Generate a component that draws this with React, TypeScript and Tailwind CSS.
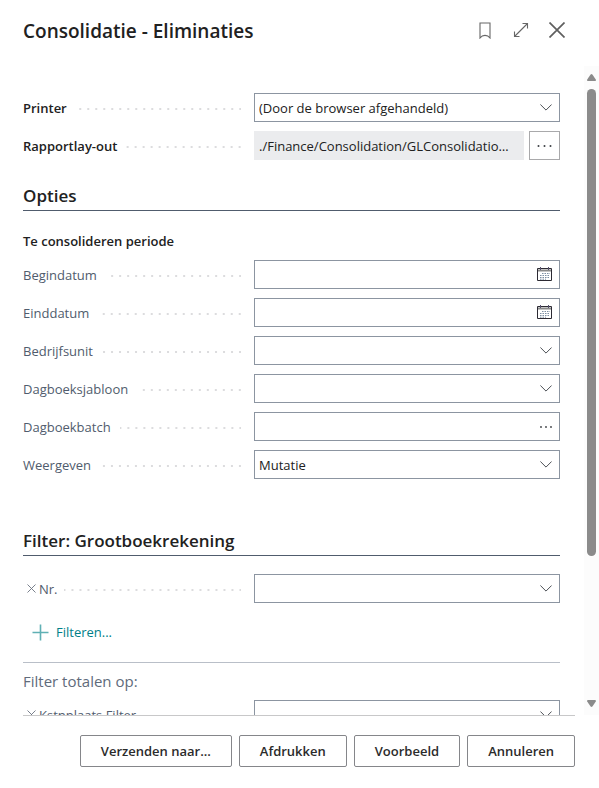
import { useState, type ReactNode } from 'react'
import clsx from 'clsx'

const PRINTERS = ['(Door de browser afgehandeld)']
const DISPLAY_OPTIONS = ['Mutatie', 'Saldo']
const ACTIONS = ['Verzenden naar...', 'Afdrukken', 'Voorbeeld', 'Annuleren']

const fieldBox = 'flex h-[29px] min-w-0 flex-1 items-center border border-[#8c95a1] bg-white'

function ChevronIcon() {
  return (
    <svg width="12" height="7" viewBox="0 0 12 7" fill="none" stroke="#4c5056" strokeWidth="1">
      <path d="M0.4 0.5L6 6.100l5.600-5.600" />
    </svg>
  )
}

function DotsIcon() {
  return (
    <svg width="12" height="2" viewBox="0 0 12 2" fill="#3c3f44">
      <circle cx="1" cy="1" r="0.9" />
      <circle cx="6" cy="1" r="0.9" />
      <circle cx="11" cy="1" r="0.9" />
    </svg>
  )
}

function WideDotsIcon() {
  return (
    <svg width="15" height="2" viewBox="0 0 15 2" fill="#3c3f44">
      <circle cx="1.500" cy="1" r="1" />
      <circle cx="7.500" cy="1" r="1" />
      <circle cx="13.500" cy="1" r="1" />
    </svg>
  )
}

function CalendarIcon() {
  return (
    <svg width="18" height="15" viewBox="0 0 18 15" fill="none">
      <path d="M1 3.500h13" stroke="#8a8a8a" strokeWidth="2" />
      <path d="M0.500 1.500h14v12h-14z" stroke="#2c2a33" />
      <path d="M3.500 0v3M11.500 0v3" stroke="#55506e" />
      <path d="M5 6.500h8M3 8.500h10M3 10.500h10M3 12.200h6" stroke="#7c8fa3" strokeDasharray="1.500 1" />
    </svg>
  )
}

function Row({ id, label, strong, onRemove, children }: {
  id: string
  label: string
  strong?: boolean
  onRemove?: () => void
  children: ReactNode
}) {
  return (
    <div className="flex items-center">
      <div className="flex w-[231px] shrink-0 items-center">
        {onRemove && (
          <button type="button" aria-label={`${label} verwijderen`} onClick={onRemove} className="flex h-4 w-4 items-center justify-center">
            <svg width="9" height="9" viewBox="0 0 9 9" stroke="#6b7380" strokeWidth="0.9">
              <path d="M0.5 0.5l8 8M8.5 0.5l-8 8" />
            </svg>
          </button>
        )}
        <label htmlFor={id} className={clsx('whitespace-nowrap', strong ? 'font-semibold text-[#212121]' : 'text-[#505c6d]')}>
          {label}
        </label>
        <span
          className={clsx(
            'mt-0.5 mr-[13px] h-0.5 flex-1 bg-[linear-gradient(90deg,transparent_6px,#dcdcde_6px)] bg-[length:8px_2px] bg-right',
            onRemove ? 'ml-1.5' : 'ml-[9px]',
          )}
        />
      </div>
      {children}
    </div>
  )
}

function LookupField({ id, icon, action }: { id: string; icon: ReactNode; action: string }) {
  return (
    <div className={fieldBox}>
      <input id={id} type="text" className="h-full min-w-0 flex-1 px-1 text-[#212121] outline-none" />
      <button type="button" aria-label={action} className="flex h-full w-[26px] items-center justify-center">
        {icon}
      </button>
    </div>
  )
}

function SelectField({ id, options }: { id: string; options: string[] }) {
  return (
    <div className={clsx(fieldBox, 'relative')}>
      <select id={id} className="h-full w-full appearance-none bg-transparent pr-7 pl-1 text-[#212121] outline-none">
        {options.map(o => <option key={o}>{o}</option>)}
      </select>
      <span className="pointer-events-none absolute inset-y-0 right-0 flex w-[26px] items-center justify-center">
        <ChevronIcon />
      </span>
    </div>
  )
}

function SectionTitle({ children }: { children: ReactNode }) {
  return (
    <h2 className="border-b border-[#505c6d] pb-0.5 text-[17px] leading-6 font-semibold text-[#212121]">{children}</h2>
  )
}

export default function App() {
  const [showNr, setShowNr] = useState(true)
  const [showDimension, setShowDimension] = useState(true)

  return (
    <div className="flex h-screen flex-col bg-white font-['Open_Sans',sans-serif] text-[13px] leading-5">
      <header className="flex h-[66px] shrink-0 items-start justify-between pt-4 pr-6 pl-[23px]">
        <h1 className="text-[19px] leading-[30px] font-semibold text-[#212121]">Consolidatie - Eliminaties</h1>
        <div className="flex">
          <button type="button" aria-label="Bladwijzer" className="flex h-7 w-9 items-center justify-center">
            <svg width="12" height="17" viewBox="0 0 12 17" fill="none" stroke="#666" strokeWidth="1.1">
              <path d="M1 1h10v15c-1.5-2-2.5-2.6-5-2.6S2.500 14 1 16z" />
            </svg>
          </button>
          <button type="button" aria-label="Uitvouwen" className="flex h-7 w-9 items-center justify-center">
            <svg width="16" height="16" viewBox="0 0 16 16" fill="none" stroke="#666" strokeWidth="1.1">
              <path d="M1.500 14.500l13-13M9.500 1.500h5v5M1.500 9.500v5h5" />
            </svg>
          </button>
          <button type="button" aria-label="Sluiten" className="flex h-7 w-9 items-center justify-center">
            <svg width="16" height="16" viewBox="0 0 16 16" fill="none" stroke="#5f5f5f" strokeWidth="1.7">
              <path d="M0.500 0.500l15 15M15.500 0.500l-15 15" />
            </svg>
          </button>
        </div>
      </header>

      <div className="flex min-h-0 flex-1">
        <main className="min-w-0 flex-1 overflow-y-auto pt-[27px] pr-6 pl-[23px] [scrollbar-width:none]">
          <div className="flex flex-col gap-[9px]">
            <Row id="printer" label="Printer" strong>
              <SelectField id="printer" options={PRINTERS} />
            </Row>
            <Row id="layout" label="Rapportlay-out" strong>
              <input
                id="layout"
                readOnly
                value="./Finance/Consolidation/GLConsolidationEliminations.rdlc"
                className="h-[29px] min-w-0 flex-1 truncate bg-[#ebecee] pr-2 pl-[5px] text-[#212121] outline-none"
              />
              <button type="button" aria-label="Lay-out kiezen" className="ml-[5px] flex h-[29px] w-[31px] items-center justify-center border border-[#a9a9ab]">
                <WideDotsIcon />
              </button>
            </Row>
          </div>

          <section className="mt-6">
            <SectionTitle>Opties</SectionTitle>
            <h3 className="mt-5 font-semibold text-[#212121]">Te consolideren periode</h3>
            <div className="mt-[9px] flex flex-col gap-[9px]">
              <Row id="begin" label="Begindatum">
                <LookupField id="begin" action="Datum kiezen" icon={<CalendarIcon />} />
              </Row>
              <Row id="eind" label="Einddatum">
                <LookupField id="eind" action="Datum kiezen" icon={<CalendarIcon />} />
              </Row>
              <Row id="unit" label="Bedrijfsunit">
                <LookupField id="unit" action="Waarde kiezen" icon={<ChevronIcon />} />
              </Row>
              <Row id="sjabloon" label="Dagboeksjabloon">
                <LookupField id="sjabloon" action="Waarde kiezen" icon={<ChevronIcon />} />
              </Row>
              <Row id="batch" label="Dagboekbatch">
                <LookupField id="batch" action="Waarde opzoeken" icon={<DotsIcon />} />
              </Row>
              <Row id="weergeven" label="Weergeven">
                <SelectField id="weergeven" options={DISPLAY_OPTIONS} />
              </Row>
            </div>
          </section>

          <section className="mt-[50px] pb-6">
            <SectionTitle>Filter: Grootboekrekening</SectionTitle>
            <div className="mt-[18px]">
              {showNr && (
                <Row id="nr" label="Nr." onRemove={() => setShowNr(false)}>
                  <LookupField id="nr" action="Waarde kiezen" icon={<ChevronIcon />} />
                </Row>
              )}
            </div>
            <button type="button" onClick={() => setShowNr(true)} className="mt-[19px] ml-[9px] flex items-center gap-[7px] text-[#008089]">
              <svg width="17" height="17" viewBox="0 0 17 17" stroke="#5fb0b4" strokeWidth="1.6">
                <path d="M8.500 0.500v16M0.500 8.500h16" />
              </svg>
              Filteren...
            </button>
            <h3 className="mt-5 border-t border-[#b9bfc8] pt-[7px] text-[15px] leading-[22px] text-[#606b7b]">Filter totalen op:</h3>
            <div className="mt-2">
              {showDimension && (
                <Row id="kstnplaats" label="Kstnplaats Filter" onRemove={() => setShowDimension(false)}>
                  <LookupField id="kstnplaats" action="Waarde kiezen" icon={<ChevronIcon />} />
                </Row>
              )}
            </div>
          </section>
        </main>

        <div aria-hidden="true" className="flex w-[15px] shrink-0 flex-col items-center bg-[#fcfcfc] pt-2 pb-2">
          <svg width="9" height="7" viewBox="0 0 9 7" fill="#8b8b8b">
            <path d="M3.600 0.500Q4.500-.4 5.400.5L8.800 5.500Q9.200 7 8 7H1Q-.2 7 .2 5.500z" />
          </svg>
          <div className="my-2 min-h-0 w-[9px] flex-1">
            <div className="h-[77.5%] rounded-full bg-[#8b8b8b]" />
          </div>
          <svg width="9" height="7" viewBox="0 0 9 7" fill="#8b8b8b">
            <path d="M3.600 6.500Q4.500 7.400 5.400 6.500L8.800 1.500Q9.200 0 8 0H1Q-.2 0 .2 1.500z" />
          </svg>
        </div>
      </div>

      <footer className="mr-6 ml-[23px] flex shrink-0 justify-end gap-[7px] border-t border-[#c8c8c9] pt-[19px] pb-[21px]">
        {ACTIONS.map(action => (
          <button
            key={action}
            type="button"
            className="h-8 rounded-xs border border-[#85868a] bg-white px-5 font-semibold whitespace-nowrap text-[#2b2b2b]"
          >
            {action}
          </button>
        ))}
      </footer>
    </div>
  )
}
